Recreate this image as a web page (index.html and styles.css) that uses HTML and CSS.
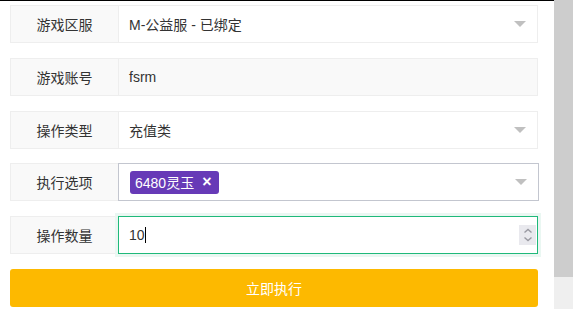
FILE: index.html
```html
<!DOCTYPE html>
<html lang="zh-CN">
<head>
    <meta charset="UTF-8">
    <meta name="viewport" content="width=device-width, initial-scale=1.0">
    <title>操作面板</title>
    <link rel="stylesheet" href="styles.css">
</head>
<body>
<div class="page">
    <div class="main">
        <div class="row">
            <div class="label">游戏区服</div>
            <div class="field select">
                <span>M-公益服 - 已绑定</span>
                <span class="arrow"></span>
            </div>
        </div>
        <div class="row">
            <div class="label">游戏账号</div>
            <div class="field disabled"><span>fsrm</span></div>
        </div>
        <div class="row">
            <div class="label">操作类型</div>
            <div class="field select">
                <span>充值类</span>
                <span class="arrow"></span>
            </div>
        </div>
        <div class="row">
            <div class="label">执行选项</div>
            <div class="field select multi">
                <span class="tag">6480灵玉 <span class="tag-close">×</span></span>
                <span class="arrow"></span>
            </div>
        </div>
        <div class="row">
            <div class="label">操作数量</div>
            <div class="field focus">
                <span>10<span class="caret"></span></span>
                <span class="spinner">
                    <svg width="12" height="16" viewBox="0 0 12 16"><path d="M2.5 5.5 L6 2.5 L9.5 5.5" fill="none" stroke="#9a9aa2" stroke-width="1.4"/><path d="M2.5 10.5 L6 13.5 L9.5 10.5" fill="none" stroke="#9a9aa2" stroke-width="1.4"/></svg>
                </span>
            </div>
        </div>
        <button class="submit">立即执行</button>
    </div>
    <div class="scrollbar"><div class="thumb"></div></div>
</div>
</body>
</html>
```

FILE: styles.css
```css
body { margin: 0; font-family: "Liberation Sans", "Noto Sans CJK SC", sans-serif; font-size: 14px; color: #333; background: #fff; }
.page { display: flex; height: 309px; overflow: hidden; }
.main { width: 528px; padding: 4px 16px 0 10px; border-top: 1px solid #000; display: flex; flex-direction: column; gap: 14.75px; }
.row { display: flex; height: 38px; }
.label { width: 108px; flex: none; box-sizing: border-box; display: flex; align-items: center; justify-content: center; background: #f9f9f9; border: 1px solid #eee; border-right: none; }
.field { flex: 1; box-sizing: border-box; display: flex; align-items: center; justify-content: space-between; padding: 0 10px 0 10px; border: 1px solid #eee; background: #fff; }
.field.disabled { background: #f9f9f9; }
.field.multi { border-color: #c3c6cf; margin-right: -1px; }
.field.focus { border-color: #1fb97a; box-shadow: 0 0 0 3px #eaf7f2; padding-right: 0; }
.arrow { width: 0; height: 0; border-left: 6px solid transparent; border-right: 6px solid transparent; border-top: 6px solid #c0c0c0; margin-right: 1px; }
.tag { display: inline-flex; align-items: center; gap: 8px; height: 23px; padding: 0 7px 0 5px; background: #673ab7; color: #fff; border-radius: 3px; margin-left: 1px; }
.tag-close { font-size: 16px; font-weight: bold; }
.caret { display: inline-block; width: 1px; height: 16px; background: #000; vertical-align: -3px; }
.spinner { display: flex; align-items: center; justify-content: center; width: 17px; height: 20px; background: #e9e9ee; margin-right: 1px; }
.submit { height: 38px; border: none; border-radius: 3px; background: #fdb900; color: #fff; font-family: inherit; font-size: 14px; }
.scrollbar { width: 19px; flex: none; margin-left: auto; background: #efefef; }
.thumb { height: 277px; background: #cdcdcd; }
```
